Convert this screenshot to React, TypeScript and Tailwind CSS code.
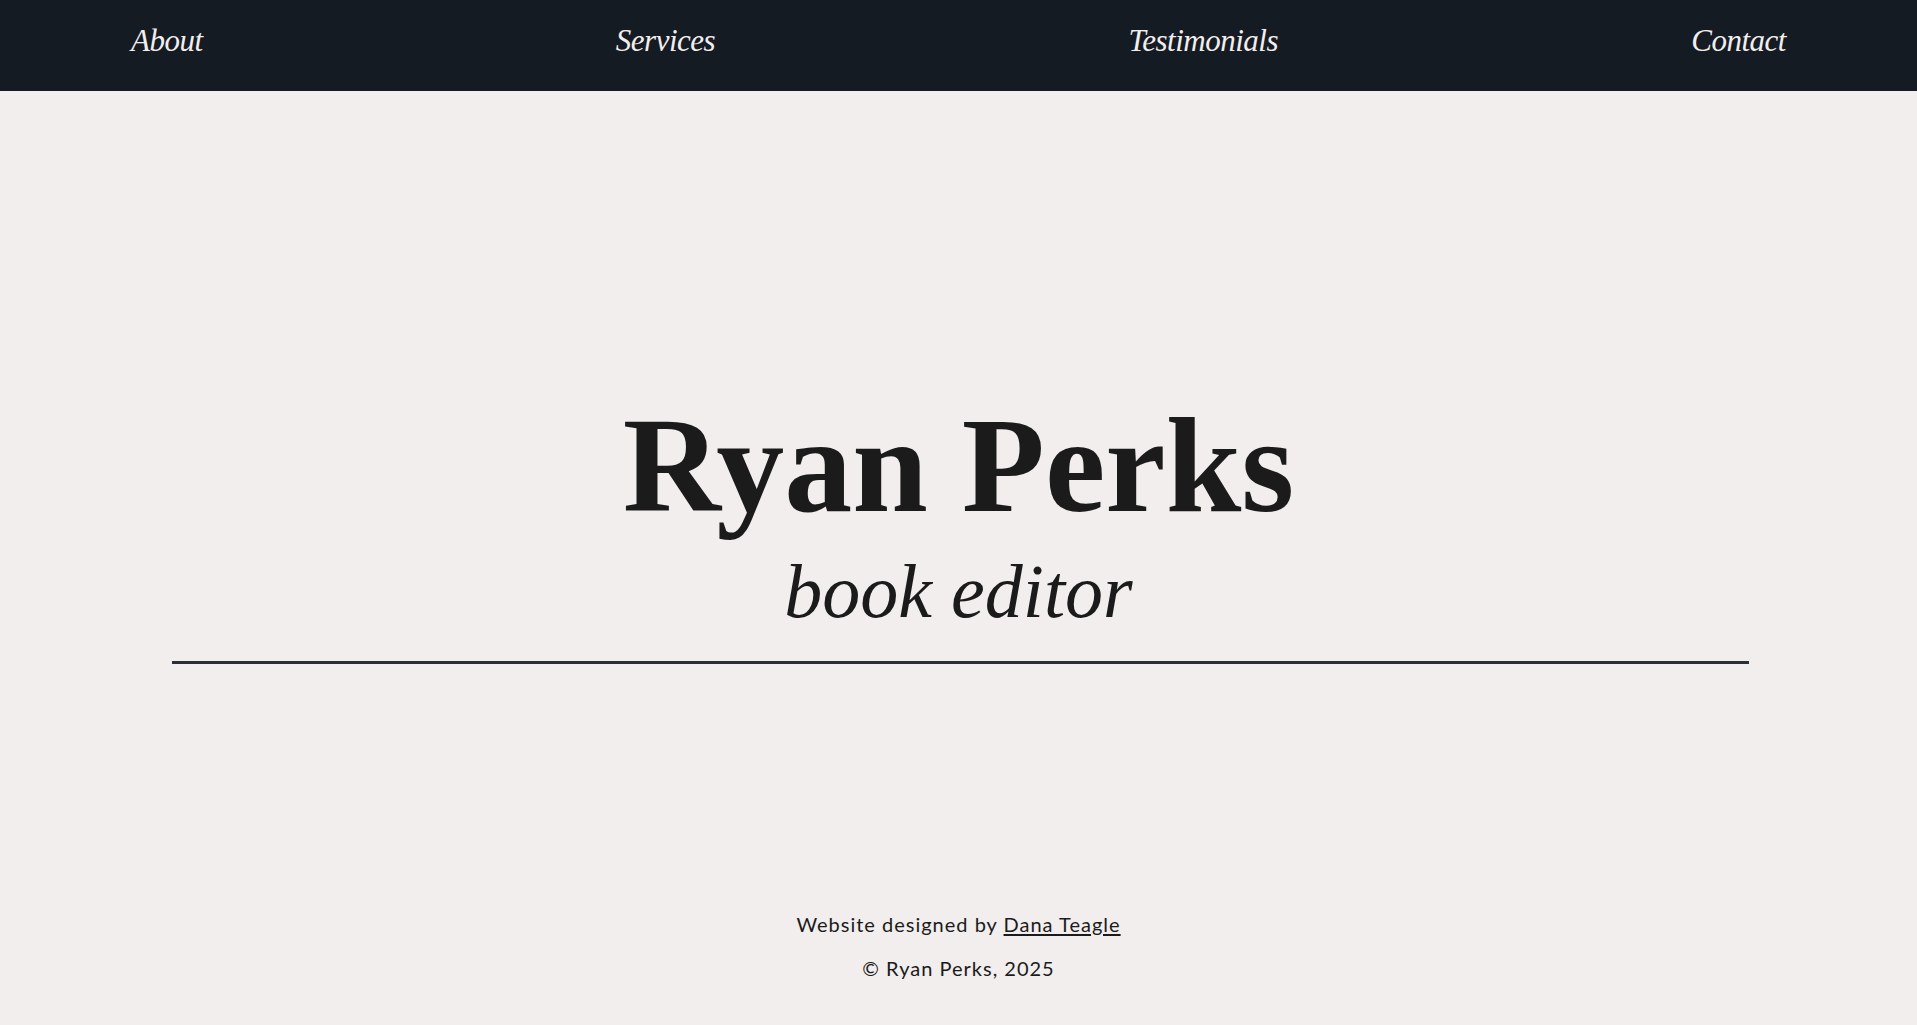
import React from "react";

const links = ["About", "Services", "Testimonials", "Contact"];

const App: React.FC = () => {
  return (
    <div className="min-h-screen flex flex-col bg-[#f2eeed] text-[#1b1b1b]">
      <nav className="h-[91px] bg-[#151b23] flex justify-between items-start px-[131px] pt-[25px]">
        {links.map((l) => (
          <a
            key={l}
            href={"#" + l.toLowerCase()}
            className="text-[31px] leading-none italic tracking-[-0.5px] text-[#f2eeed] font-['Liberation_Serif',serif]"
          >
            {l}
          </a>
        ))}
      </nav>

      <main className="pt-[306px] flex flex-col items-center">
        <h1 className="text-[136px] leading-none font-bold font-['Liberation_Serif',serif]">
          Ryan Perks
        </h1>
        <h2 className="mt-[20px] text-[76px] leading-none italic font-['Liberation_Serif',serif]">
          book editor
        </h2>
        <hr className="mt-[32px] self-start ml-[172px] w-[1577px] border-0 h-[3px] bg-[#2a2f38]" />
      </main>

      <footer className="mt-auto pb-[45px] flex flex-col items-center gap-[20px] text-[20px] leading-[24px] tracking-[1px] font-['Lato',sans-serif]">
        <p>
          Website designed by{" "}
          <a href="#" className="underline underline-offset-2">
            Dana Teagle
          </a>
        </p>
        <p>© Ryan Perks, 2025</p>
      </footer>
    </div>
  );
};

export default App;
